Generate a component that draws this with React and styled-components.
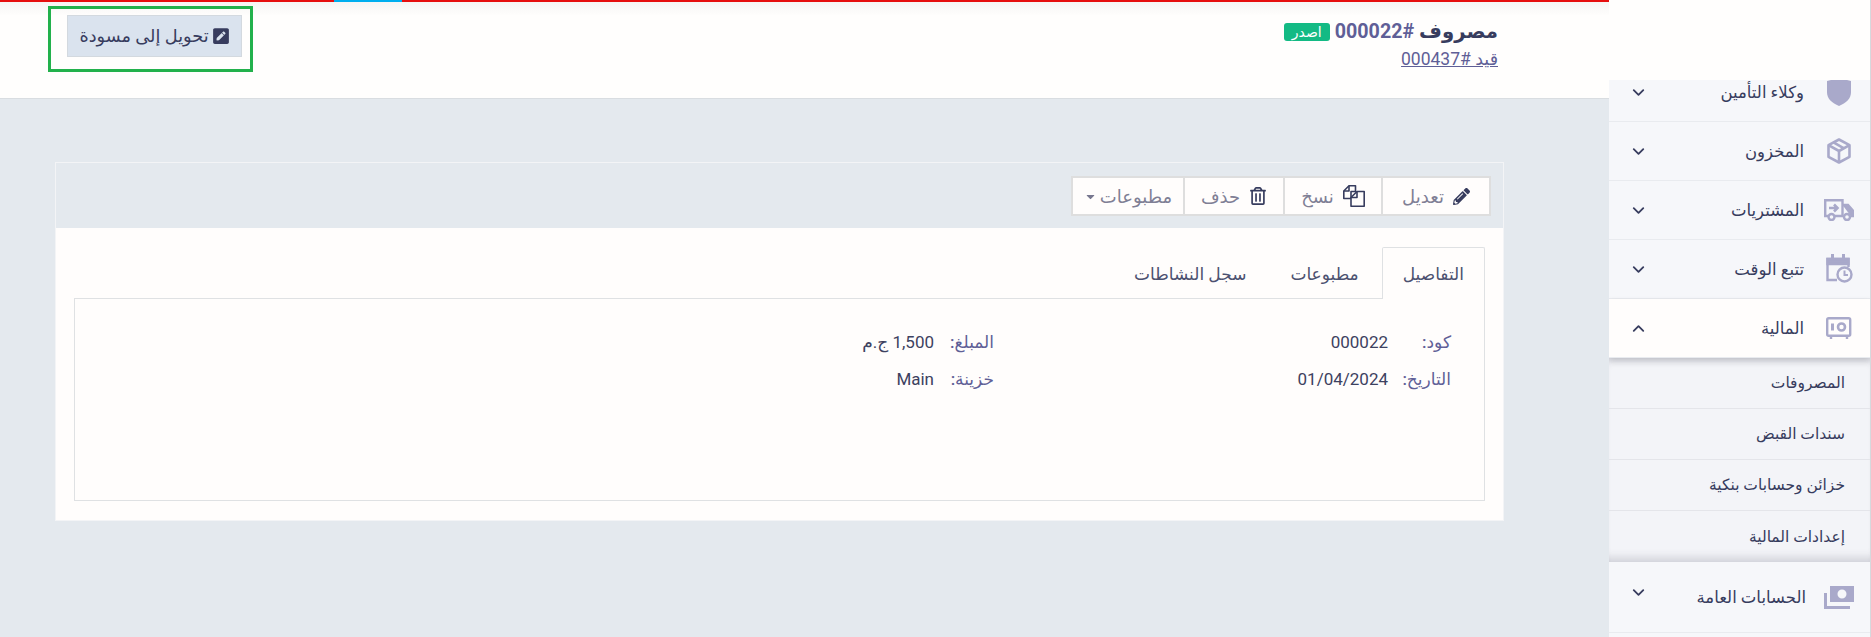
import React from "react";
import styled, { createGlobalStyle } from "styled-components";
import { FaPencilAlt, FaPenSquare, FaRegTrashAlt, FaCaretDown } from "react-icons/fa";
import { ChevronDown, ChevronUp } from "lucide-react";

const Global = createGlobalStyle`
  html, body { margin: 0; padding: 0; background: #e4e9ee; }
  body { font-family: Roboto, "Noto Sans", "DejaVu Sans", sans-serif; color: #373c5e; }
  * { box-sizing: border-box; }
`;

const Page = styled.div`
  display: flex;
  direction: rtl;
  width: 1871px;
  height: 637px;
  overflow: hidden;
`;

/* sidebar */
const Sidebar = styled.aside`
  width: 262px;
  flex: none;
  background: #f6f7fa;
  border-right: 1px solid #d5d9dd;
  overflow: hidden;
`;

const Logo = styled.div`
  position: relative;
  z-index: 3;
  height: 80px;
  background: #fffefd;
`;

const Menu = styled.nav`
  margin-top: -17px;
`;

const Item = styled.div`
  display: flex;
  align-items: center;
  height: ${p => (p.$tall ? "71px" : "59px")};
  padding: 0 11px 0 20px;
  gap: ${p => (p.$tall ? "13px" : "15px")};
  font-size: 16.5px;
  font-weight: 500;
  color: #373c5e;
  background: ${p => (p.$open ? "#fffdfc" : "#f6f7fa")};
  border-bottom: 1px solid #e9ebef;
  position: relative;
  z-index: ${p => (p.$open ? 2 : 1)};
  box-shadow: ${p => (p.$open ? "0 3px 6px rgba(60,60,80,0.18)" : "none")};
`;

const ItemIcon = styled.span`
  width: 40px;
  display: flex;
  justify-content: center;
  flex: none;
  color: #a9a9ca;
`;

const Chevron = styled.span`
  margin-right: auto;
  display: flex;
  color: #373c5e;
  transform: translateY(${p => (p.$lift ? "-5px" : "0")});
`;

const SubMenu = styled.div`
  background: #f3f4f8;
  box-shadow: inset 0 8px 8px -6px rgba(60,60,80,0.16), inset 0 -12px 10px -8px rgba(60,60,80,0.2);
`;

const SubItem = styled.div`
  height: 51px;
  display: flex;
  align-items: center;
  padding-right: 25px;
  font-size: 15.5px;
  font-weight: 500;
  color: #373c5e;
  border-bottom: 1px solid #e4e5ea;
  &:last-child { border-bottom: none; }
`;

/* main column */
const Main = styled.main`
  flex: 1;
  min-width: 0;
`;

const TopLine = styled.div`
  display: flex;
  height: 2px;
  background: #e60f0f;
  direction: ltr;
`;

const Progress = styled.span`
  width: 68px;
  margin-left: 334px;
  background: #00aeef;
`;

const Header = styled.header`
  height: 97px;
  display: flex;
  justify-content: space-between;
  align-items: flex-start;
  padding: 4px 111px 0 48px;
  background: linear-gradient(#f6f5f4, #fffefd 14px);
  border-bottom: 1px solid #d9dde1;
`;

const TitleBlock = styled.div`
  padding-top: 14px;
`;

const TitleRow = styled.div`
  display: flex;
  align-items: center;
  gap: 5px;
`;

const Title = styled.h1`
  margin: 0;
  font-size: 19.7px;
  line-height: 24px;
  font-weight: 700;
  color: #373c5e;
`;

const Code = styled.span`
  color: #5f5f97;
`;

const Badge = styled.span`
  background: #13ba84;
  color: #fff;
  font-size: 14px;
  line-height: 18px;
  padding: 0 8px;
  border-radius: 3px;
  font-weight: 500;
`;

const EntryLink = styled.a`
  display: block;
  margin-top: 3px;
  font-size: 17.5px;
  line-height: 24px;
  color: #5f5f97;
  text-decoration: underline;
`;

const Frame = styled.div`
  border: 3px solid #22b14c;
  padding: 6px 8px 12px 16px;
`;

const DraftButton = styled.button`
  display: flex;
  align-items: center;
  gap: 3px;
  direction: rtl;
  width: 175px;
  height: 42px;
  justify-content: center;
  background: #dae3ee;
  border: 1px solid #d3d9df;
  color: #373c5e;
  font-family: inherit;
  font-size: 17.7px;
  padding: 0;
  svg { font-size: 18px; flex: none; }
`;

const Content = styled.div`
  padding: 63px 105px 0 55px;
`;

const Card = styled.section`
  border: 1px solid #f3f4f6;
  background: #fffdfc;
  height: 359px;
`;

const Toolbar = styled.div`
  display: flex;
  height: 65px;
  padding: 13px 12px 0 0;
  background: #e4e9ee;
`;

const ToolButton = styled.button`
  display: flex;
  align-items: center;
  justify-content: center;
  gap: 9px;
  width: ${p => p.$w}px;
  height: 40px;
  background: #fffdfc;
  border: 2px solid #dedede;
  margin-left: -2px;
  color: #7f7f95;
  font-family: inherit;
  font-size: 18px;
  padding: 0;
  svg { color: #373c5e; flex: none; }
`;

const CaretWrap = styled.span`
  display: flex;
  margin-right: -6px;
  svg { color: #77778f; font-size: 13px; }
`;

const CardBody = styled.div`
  padding: 19px 18px 0;
`;

const Tabs = styled.div`
  display: flex;
  height: 52px;
`;

const Tab = styled.div`
  display: flex;
  align-items: center;
  height: 52px;
  padding: 0 20px;
  margin-left: 2px;
  font-size: 17px;
  color: #4c5170;
  border: 1px solid ${p => (p.$active ? "#dfe1e3" : "transparent")};
  border-bottom: none;
  background: ${p => (p.$active ? "#fffdfc" : "transparent")};
  border-radius: 2px 2px 0 0;
  position: relative;
  z-index: 1;
`;

const Panel = styled.div`
  height: 203px;
  margin-top: -1px;
  border: 1px solid #dfe1e3;
  padding: 24px 33px;
  display: grid;
  grid-template-columns: 457px 1fr;
  grid-auto-rows: 37px;
`;

const Field = styled.div`
  display: flex;
  align-items: center;
  font-size: 17px;
`;

const Label = styled.span`
  width: ${p => p.$w}px;
  flex: none;
  color: #5f5f97;
  font-weight: 500;
`;

const Value = styled.span`
  color: #3d4160;
`;

function FilesIcon() {
  return (
    <svg width="22" height="22" viewBox="0 0 22 22" fill="none" stroke="#373c5e" strokeWidth="1.6" strokeLinejoin="round">
      <path d="M6 .8h6.5v5.7H8v7H.8V6z" fill="#fffdfc" />
      <path d="M6 .8V6H.8" />
      <path d="M14 6.5h7.2v14.7H8V12.5z" fill="#fffdfc" />
      <path d="M14 6.5v6H8" />
    </svg>
  );
}

function ShieldIcon() {
  return (
    <svg width="24" height="28" viewBox="0 0 24 28" fill="currentColor">
      <path d="M12 0l12 3v11c0 7-5 11-12 14C5 25 0 21 0 14V3z" />
    </svg>
  );
}

function BoxIcon() {
  return (
    <svg width="24" height="26" viewBox="0 0 24 26" fill="none" stroke="currentColor" strokeWidth="2.6" strokeLinejoin="round">
      <path d="M12 1.5l10.5 5.7v11.6L12 24.5 1.5 18.8V7.2z" />
      <path d="M1.5 7.2L12 13l10.5-5.8M12 13v11.5M6.5 4.3l10.5 6" />
    </svg>
  );
}

function TruckIcon() {
  return (
    <svg width="30" height="22" viewBox="0 0 30 22" fill="none" stroke="currentColor" strokeWidth="2.4">
      <path d="M4 17H1.2V1.2h17.3V17H11" />
      <path d="M18.5 6h5.5l4.8 5.5V17h-2" fill="currentColor" />
      <circle cx="7.5" cy="18" r="3" />
      <circle cx="23" cy="18" r="3" />
      <path d="M5 9h8M10 5.5L13.5 9 10 12.5" strokeWidth="2.6" />
    </svg>
  );
}

function CalendarIcon() {
  return (
    <svg width="27" height="30" viewBox="0 0 27 30" fill="none" stroke="currentColor" strokeWidth="2.4">
      <path d="M11 26H1.5V5h21v8" />
      <path d="M1.5 5h21v5h-21z" fill="currentColor" />
      <path d="M6.5 0v5M17.5 0v5" strokeWidth="3" />
      <circle cx="18.5" cy="20.5" r="7" fill="#f6f7fa" />
      <path d="M18.5 16.5v4.5h3.5" strokeWidth="2" />
    </svg>
  );
}

function SafeIcon() {
  return (
    <svg width="26" height="22" viewBox="0 0 26 22" fill="none" stroke="currentColor" strokeWidth="2.4">
      <rect x="1.2" y="1.2" width="23" height="17.6" rx="1.5" />
      <path d="M5 19v3M21 19v3" />
      <path d="M6.5 6.5v7" strokeWidth="3" />
      <circle cx="15.5" cy="10" r="3.5" strokeWidth="2.6" />
    </svg>
  );
}

function MoneyIcon() {
  return (
    <svg width="30" height="23" viewBox="0 0 30 23" fill="currentColor">
      <path d="M6 0h24v16H6zm12 3.5a4.5 4.5 0 100 9 4.5 4.5 0 000-9z" fillRule="evenodd" />
      <path d="M0 7h3v13h23v3H0z" />
    </svg>
  );
}

const topItems = [
  { label: "وكلاء التأمين", icon: <ShieldIcon /> },
  { label: "المخزون", icon: <BoxIcon /> },
  { label: "المشتريات", icon: <TruckIcon /> },
  { label: "تتبع الوقت", icon: <CalendarIcon /> },
];

const subItems = ["المصروفات", "سندات القبض", "خزائن وحسابات بنكية", "إعدادات المالية"];

export default function App() {
  return (
    <>
      <Global />
      <Page dir="rtl">
        <Sidebar>
          <Logo />
          <Menu>
            {topItems.map(item => (
              <Item key={item.label}>
                <ItemIcon>{item.icon}</ItemIcon>
                {item.label}
                <Chevron><ChevronDown size={19} strokeWidth={2.3} /></Chevron>
              </Item>
            ))}
            <Item $open>
              <ItemIcon><SafeIcon /></ItemIcon>
              المالية
              <Chevron><ChevronUp size={19} strokeWidth={2.3} /></Chevron>
            </Item>
            <SubMenu>
              {subItems.map(s => <SubItem key={s}>{s}</SubItem>)}
            </SubMenu>
            <Item $tall>
              <ItemIcon><MoneyIcon /></ItemIcon>
              الحسابات العامة
              <Chevron $lift><ChevronDown size={19} strokeWidth={2.3} /></Chevron>
            </Item>
          </Menu>
        </Sidebar>
        <Main>
          <TopLine><Progress /></TopLine>
          <Header>
            <TitleBlock>
              <TitleRow>
                <Title>مصروف <Code>{"#\u200F000022"}</Code></Title>
                <Badge>اصدر</Badge>
              </TitleRow>
              <EntryLink>{"قيد #\u200F000437"}</EntryLink>
            </TitleBlock>
            <Frame>
              <DraftButton><FaPenSquare />تحويل إلى مسودة</DraftButton>
            </Frame>
          </Header>
          <Content>
            <Card>
              <Toolbar>
                <ToolButton $w={110}><FaPencilAlt size={17} />تعديل</ToolButton>
                <ToolButton $w={100}><FilesIcon />نسخ</ToolButton>
                <ToolButton $w={102}><FaRegTrashAlt size={18} />حذف</ToolButton>
                <ToolButton $w={114}>مطبوعات<CaretWrap><FaCaretDown /></CaretWrap></ToolButton>
              </Toolbar>
              <CardBody>
                <Tabs>
                  <Tab $active>التفاصيل</Tab>
                  <Tab>مطبوعات</Tab>
                  <Tab>سجل النشاطات</Tab>
                </Tabs>
                <Panel>
                  <Field><Label $w={63}>كود:</Label><Value>000022</Value></Field>
                  <Field><Label $w={60}>المبلغ:</Label><Value>1,500 ج.م</Value></Field>
                  <Field><Label $w={63}>التاريخ:</Label><Value>01/04/2024</Value></Field>
                  <Field><Label $w={60}>خزينة:</Label><Value>Main</Value></Field>
                </Panel>
              </CardBody>
            </Card>
          </Content>
        </Main>
      </Page>
    </>
  );
}
